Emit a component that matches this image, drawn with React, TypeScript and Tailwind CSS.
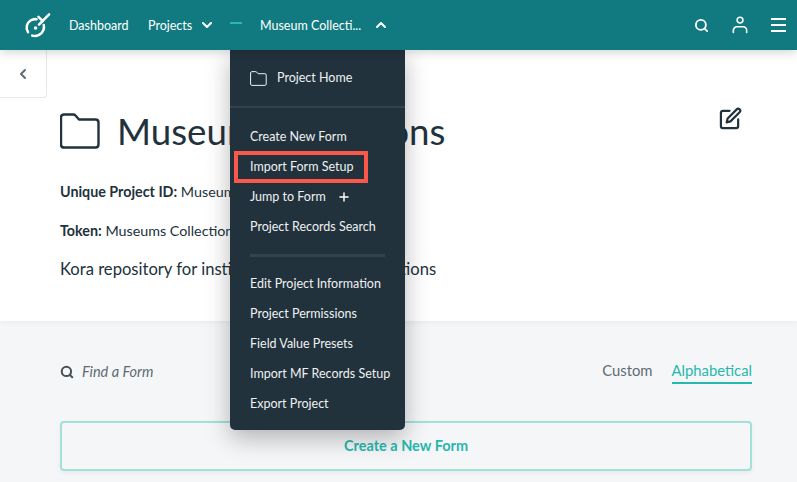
import React from 'react';
import { ChevronDown, ChevronUp, ChevronLeft, Search, Plus } from 'lucide-react';

const font = "font-['Lato','Noto_Sans',sans-serif]";

const FolderIcon = ({ className }: { className?: string }) => (
  <svg viewBox="0 0 40 36" fill="none" stroke="currentColor" className={className}>
    <path
      d="M4 1.500h9.500c.8 0 1.500.4 2 1l3.500 4h16.500c1.700 0 3 1.300 3 3v22c0 1.700-1.300 3-3 3H4c-1.700 0-3-1.300-3-3V4.500c0-1.700 1.300-3 3-3z"
      strokeWidth="2.400"
      strokeLinejoin="round"
    />
  </svg>
);

const Logo = () => (
  <svg viewBox="0 0 28 28" fill="none" stroke="white" strokeWidth="2.600" strokeLinecap="round" className="w-[27px] h-[27px]">
    <path d="M13 7.500A9 9 0 0 0 3 14c-.6 2.500-.1 5 1.200 7" />
    <path d="M8.500 24.500c5 1.300 10-1.200 11.700-6 .6-1.700.7-3.300.3-5" />
    <path d="M15.500 13 L26 2.500" />
    <path d="M15 5 L19.500 9.500" />
    <circle cx="12" cy="16.500" r="1.800" fill="white" stroke="none" />
  </svg>
);

const UserIcon = () => (
  <svg viewBox="0 0 18 20" fill="none" stroke="white" strokeWidth="1.800" strokeLinecap="round" className="w-[16px] h-[18px]">
    <circle cx="9" cy="4.500" r="3.300" />
    <path d="M1.500 18.500v-2.500c0-2.200 1.800-4 4-4h7c2.200 0 4 1.800 4 4v2.500" />
  </svg>
);

const EditIcon = () => (
  <svg viewBox="0 0 24 24" fill="none" stroke="#22323c" strokeWidth="2.300" strokeLinecap="round" strokeLinejoin="round" className="w-[23px] h-[23px]">
    <path d="M11 4H4a2 2 0 0 0-2 2v14a2 2 0 0 0 2 2h14a2 2 0 0 0 2-2v-7" />
    <path d="M18.500 2.500a2.100 2.100 0 0 1 3 3L12 15l-4 1 1-4z" />
  </svg>
);

const MenuRow = ({ label, children }: { label: string; children?: React.ReactNode }) => (
  <div className="h-[30px] pl-5 flex items-center gap-[11px] text-[12.500px] text-[#eef1f2] whitespace-nowrap">
    {label}
    {children}
  </div>
);

export default function App() {
  return (
    <div className={`relative w-[797px] h-[482px] overflow-hidden bg-[#f5f6f8] ${font}`}>
      {/* Top nav */}
      <header className="relative z-20 h-[50px] bg-[#117a80] flex items-center pl-[24px] pr-[11px] text-white text-[12.500px] shadow-[0_2px_10px_rgba(0,0,0,0.18)]">
        <Logo />
        <span className="ml-[18px] w-[60px] whitespace-nowrap mt-[2px]">Dashboard</span>
        <span className="ml-[19px] w-[46px] whitespace-nowrap mt-[2px]">Projects</span>
        <ChevronDown className="ml-[5px] w-[16px] h-[16px]" strokeWidth={3} />
        <div className="ml-[15px] mb-[4px] w-[12px] h-[2px] bg-[#26b8ad]" />
        <span className="ml-[18px] w-[104px] whitespace-nowrap mt-[2px]">Museum Collecti...</span>
        <ChevronUp className="ml-[9px] w-[16px] h-[16px]" strokeWidth={3} />
        <div className="ml-auto flex items-center gap-[23px]">
          <Search className="w-[15px] h-[15px]" strokeWidth={3} />
          <UserIcon />
          <div className="w-[15px] flex flex-col gap-[4px]">
            <div className="h-[2px] bg-white" />
            <div className="h-[2px] bg-white" />
            <div className="h-[2px] bg-white" />
          </div>
        </div>
      </header>

      {/* Project info */}
      <section className="relative h-[271px] bg-white pl-[60px] pr-[55px] pt-[57px] text-[#22323c] shadow-[0_1px_6px_rgba(0,0,0,0.06)]">
        <div className="flex items-center justify-between">
          <div className="flex items-center">
            <FolderIcon className="w-[40px] h-[36px] text-[#22323c]" />
            <h1 className="ml-[17px] text-[36.700px] leading-[44px] font-normal whitespace-nowrap">Museum Collections</h1>
          </div>
          <div className="mb-[24px]">
            <EditIcon />
          </div>
        </div>
        <p className="mt-[28px] text-[14.300px] leading-[20px]"><b className="font-bold">Unique Project ID:</b> Museum Collections</p>
        <p className="mt-[19px] text-[14.300px] leading-[20px]"><b className="font-bold">Token:</b> Museums Collection</p>
        <p className="mt-[17px] text-[16.600px] leading-[22px]">Kora repository for institutional museum collections</p>
      </section>

      {/* Back tab */}
      <div className="absolute z-10 left-0 top-[50px] w-[47px] h-[48px] bg-white border-r border-b border-[#e6e8eb] rounded-br-[4px] flex items-center justify-center">
        <ChevronLeft className="w-[16px] h-[16px] text-[#5f6b73]" strokeWidth={3} />
      </div>

      {/* Forms */}
      <section className="pl-[60px] pr-[45px] pt-[37px]">
        <div className="flex items-start justify-between h-[63px]">
          <div className="flex items-center h-[27px]">
            <Search className="w-[14px] h-[14px] text-[#4a5257]" strokeWidth={3.500} />
            <span className="ml-[8px] text-[14.500px] italic text-[#5f6b73]">Find a Form</span>
          </div>
          <div className="flex items-start gap-[19px] text-[14.800px]">
            <span className="text-[#5f6b73] leading-[24px]">Custom</span>
            <span className="text-[#26b8ad] leading-[24px] border-b-2 border-[#26b8ad]">Alphabetical</span>
          </div>
        </div>
        <div className="h-[50px] rounded-[4px] border-2 border-[#a3e0da] flex items-center justify-center text-[14.500px] font-bold text-[#26b8ad] shadow-[0_2px_5px_rgba(0,0,0,0.05)]">
          Create a New Form
        </div>
      </section>

      {/* Project dropdown */}
      <div className="absolute z-10 left-[230px] top-[50px] w-[175px] h-[380px] bg-[#22323c] rounded-b-[5px] shadow-[0_8px_24px_rgba(0,0,0,0.28)]">
        <div className="h-[58px] pl-5 flex items-center text-[12.500px] text-[#eef1f2] border-b-2 border-[#33424c]">
          <FolderIcon className="w-[17px] h-[15px] text-[#eef1f2]" />
          <span className="ml-[10px]">Project Home</span>
        </div>
        <div className="pt-[14px]">
          <MenuRow label="Create New Form" />
          <div className="relative">
            <MenuRow label="Import Form Setup" />
            <div className="absolute left-[4px] top-[-1px] w-[134px] h-[32px] border-[4px] border-[#f9584b]" />
          </div>
          <MenuRow label="Jump to Form">
            <Plus className="w-[14px] h-[14px] text-white" strokeWidth={2.500} />
          </MenuRow>
          <MenuRow label="Project Records Search" />
        </div>
        <div className="mx-5 mt-[12px] mb-[12px] h-[3px] bg-[#33424c]" />
        <MenuRow label="Edit Project Information" />
        <MenuRow label="Project Permissions" />
        <MenuRow label="Field Value Presets" />
        <MenuRow label="Import MF Records Setup" />
        <MenuRow label="Export Project" />
      </div>
    </div>
  );
}
